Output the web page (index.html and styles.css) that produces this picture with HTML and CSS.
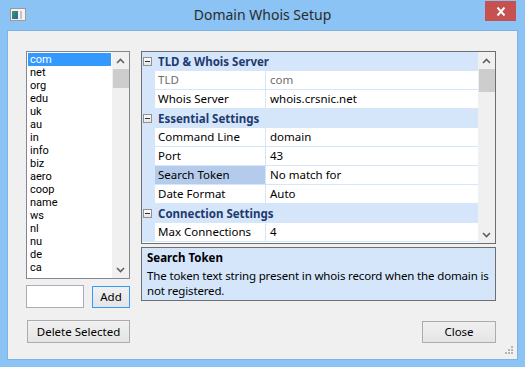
FILE: index.html
```html
<!DOCTYPE html>
<html lang="en">
<head>
    <meta charset="UTF-8">
    <title>Domain Whois Setup</title>
    <link rel="stylesheet" href="styles.css">
</head>
<body>
    <div class="window">
        <div class="titlebar">
            <div class="app-icon">
                <svg width="16" height="13" viewBox="0 0 16 13">
                    <defs>
                        <linearGradient id="ig" x1="0" y1="0" x2="1" y2="1">
                            <stop offset="0" stop-color="#3a9a6e"/>
                            <stop offset="1" stop-color="#2f5f9a"/>
                        </linearGradient>
                    </defs>
                    <rect x="0.5" y="0.5" width="15" height="12" fill="#f2f2f2" stroke="#9a9a9a"/>
                    <rect x="2" y="3" width="6" height="8" fill="url(#ig)"/>
                    <rect x="10" y="3" width="2" height="8" fill="#c4c4c4"/>
                </svg>
            </div>
            <div class="title">Domain Whois Setup</div>
            <div class="close-btn">
                <svg width="10" height="9" viewBox="0 0 10 9"><path d="M1.5 0.5L8.5 8.5M8.5 0.5L1.5 8.5" stroke="#fff" stroke-width="2"/></svg>
            </div>
        </div>

        <div class="client">
            <div class="left">
                <div class="listbox">
                    <ul class="items">
                        <li class="selected">com</li>
                        <li>net</li>
                        <li>org</li>
                        <li>edu</li>
                        <li>uk</li>
                        <li>au</li>
                        <li>in</li>
                        <li>info</li>
                        <li>biz</li>
                        <li>aero</li>
                        <li>coop</li>
                        <li>name</li>
                        <li>ws</li>
                        <li>nl</li>
                        <li>nu</li>
                        <li>de</li>
                        <li>ca</li>
                    </ul>
                    <div class="vscroll">
                        <div class="sb-btn"><svg width="9" height="6" viewBox="0 0 9 6"><path d="M1 5L4.5 1.5L8 5" fill="none" stroke="#606060" stroke-width="1.6"/></svg></div>
                        <div class="sb-thumb list-thumb"></div>
                        <div class="sb-track"></div>
                        <div class="sb-btn"><svg width="9" height="6" viewBox="0 0 9 6"><path d="M1 1L4.5 4.5L8 1" fill="none" stroke="#606060" stroke-width="1.6"/></svg></div>
                    </div>
                </div>
                <div class="add-row">
                    <div class="tld-input"></div>
                    <div class="btn btn-default btn-add">Add</div>
                </div>
                <div class="btn btn-delete">Delete Selected</div>
            </div>

            <div class="right">
                <div class="propgrid">
                    <div class="rows">
                        <div class="row category">
                            <div class="gutter"><span class="minus"></span></div>
                            <div class="cat-label">TLD &amp; Whois Server</div>
                        </div>
                        <div class="row">
                            <div class="gutter"></div>
                            <div class="name readonly">TLD</div>
                            <div class="value readonly">com</div>
                        </div>
                        <div class="row">
                            <div class="gutter"></div>
                            <div class="name">Whois Server</div>
                            <div class="value">whois.crsnic.net</div>
                        </div>
                        <div class="row category">
                            <div class="gutter"><span class="minus"></span></div>
                            <div class="cat-label">Essential Settings</div>
                        </div>
                        <div class="row">
                            <div class="gutter"></div>
                            <div class="name">Command Line</div>
                            <div class="value">domain</div>
                        </div>
                        <div class="row">
                            <div class="gutter"></div>
                            <div class="name">Port</div>
                            <div class="value">43</div>
                        </div>
                        <div class="row">
                            <div class="gutter"></div>
                            <div class="name selected">Search Token</div>
                            <div class="value">No match for</div>
                        </div>
                        <div class="row">
                            <div class="gutter"></div>
                            <div class="name">Date Format</div>
                            <div class="value">Auto</div>
                        </div>
                        <div class="row category">
                            <div class="gutter"><span class="minus"></span></div>
                            <div class="cat-label">Connection Settings</div>
                        </div>
                        <div class="row">
                            <div class="gutter"></div>
                            <div class="name">Max Connections</div>
                            <div class="value">4</div>
                        </div>
                    </div>
                    <div class="vscroll">
                        <div class="sb-btn"><svg width="9" height="6" viewBox="0 0 9 6"><path d="M1 5L4.5 1.5L8 5" fill="none" stroke="#606060" stroke-width="1.6"/></svg></div>
                        <div class="sb-thumb grid-thumb"></div>
                        <div class="sb-track"></div>
                        <div class="sb-btn"><svg width="9" height="6" viewBox="0 0 9 6"><path d="M1 1L4.5 4.5L8 1" fill="none" stroke="#606060" stroke-width="1.6"/></svg></div>
                    </div>
                </div>

                <div class="help">
                    <div class="help-title">Search Token</div>
                    <div class="help-text">The token text string present in whois record when the domain is<br>not registered.</div>
                </div>

                <div class="footer">
                    <div class="btn btn-close">Close</div>
                </div>
            </div>

            <svg class="grip" width="8" height="8" viewBox="0 0 8 8">
                <rect x="6" y="0" width="2" height="2" fill="#b5b5b5"/>
                <rect x="3" y="3" width="2" height="2" fill="#b5b5b5"/>
                <rect x="6" y="3" width="2" height="2" fill="#b5b5b5"/>
                <rect x="0" y="6" width="2" height="2" fill="#b5b5b5"/>
                <rect x="3" y="6" width="2" height="2" fill="#b5b5b5"/>
                <rect x="6" y="6" width="2" height="2" fill="#b5b5b5"/>
            </svg>
        </div>
    </div>
</body>
</html>
```

FILE: styles.css
```css
body {
    margin: 0;
    width: 525px;
    height: 367px;
    overflow: hidden;
    background: #8ac3f4;
    font-family: "Noto Sans", "Open Sans", sans-serif;
    font-size: 11.5px;
    color: #000;
}
.window {
    height: 367px;
    display: flex;
    flex-direction: column;
    padding: 0 7px 7px;
    box-sizing: border-box;
}
.titlebar {
    height: 30px;
    flex: none;
    display: grid;
    grid-template-columns: 1fr auto 1fr;
    align-items: start;
}
.app-icon {
    margin: 8px 0 0 3px;
    height: 13px;
}
.title {
    font-size: 14px;
    line-height: 18px;
    padding-top: 6px;
    color: #2b2b2b;
}
.close-btn {
    justify-self: end;
    width: 31px;
    height: 20px;
    margin: 1px 2px 0 0;
    background: #c75050;
    display: flex;
    align-items: center;
    justify-content: center;
}
.client {
    flex: 1;
    position: relative;
    display: flex;
    gap: 11px;
    padding: 20px 0 0 18px;
    background: #f0f0f0;
    border: 1px solid #7db3e4;
}
.left {
    width: 104px;
    display: flex;
    flex-direction: column;
}
.listbox {
    height: 228px;
    display: flex;
    border: 1px solid #828790;
    background: #fff;
    box-sizing: border-box;
}
.items {
    flex: 1;
    list-style: none;
    margin: 0;
    padding: 1px 1px 0;
    font-family: Roboto, "Noto Sans", sans-serif;
    font-size: 11px;
}
.items li {
    height: 13px;
    line-height: 13px;
    padding-left: 2px;
}
.items li.selected {
    background: #3399ff;
    color: #fff;
}
.vscroll {
    width: 17px;
    flex: none;
    display: flex;
    flex-direction: column;
    background: #f0f0f0;
}
.sb-btn {
    height: 17px;
    display: flex;
    align-items: center;
    justify-content: center;
}
.sb-track {
    flex: 1;
}
.sb-thumb {
    background: #cdcdcd;
    margin-left: 1px;
}
.list-thumb {
    height: 19px;
}
.grid-thumb {
    height: 23px;
}
.add-row {
    margin-top: 6px;
    display: flex;
    justify-content: space-between;
    align-items: flex-start;
}
.tld-input {
    width: 58px;
    height: 23px;
    border: 1px solid #abadb3;
    background: #fff;
    box-sizing: border-box;
}
.btn {
    height: 22px;
    line-height: 20px;
    text-align: center;
    border: 1px solid #acacac;
    background: linear-gradient(#f0f0f0, #e5e5e5);
    box-sizing: border-box;
}
.btn-default {
    border-color: #3399ff;
}
.btn-add {
    width: 38px;
    margin-top: 1px;
}
.btn-delete {
    width: 103px;
    height: 23px;
    line-height: 21px;
    margin-top: 12px;
    align-self: flex-end;
}
.right {
    width: 355px;
    display: flex;
    flex-direction: column;
}
.propgrid {
    height: 193px;
    display: flex;
    border: 1px solid #6e6e6e;
    background: #fff;
    box-sizing: border-box;
}
.rows {
    flex: 1;
}
.row {
    height: 19px;
    display: flex;
    background: #d5e6fb;
}
.gutter {
    width: 13px;
    flex: none;
    position: relative;
}
.minus {
    position: absolute;
    left: 1px;
    top: 5px;
    width: 9px;
    height: 9px;
    border: 1px solid #919191;
    background: linear-gradient(#fcfcfc, #e6e6e6);
    box-sizing: border-box;
}
.minus::after {
    content: "";
    position: absolute;
    left: 1px;
    top: 3px;
    width: 5px;
    height: 1px;
    background: #333;
}
.cat-label {
    padding-left: 3px;
    line-height: 19px;
    font-weight: bold;
    color: #1e3a6e;
}
.name {
    width: 110px;
    height: 18px;
    margin-right: 1px;
    padding-left: 3px;
    line-height: 18px;
    background: #fff;
    box-sizing: border-box;
    white-space: nowrap;
}
.name.selected {
    background: #b5cbeb;
}
.value {
    flex: 1;
    height: 18px;
    padding-left: 4px;
    line-height: 18px;
    background: #fff;
    white-space: nowrap;
}
.readonly {
    color: #6d6d6d;
}
.help {
    height: 54px;
    margin-top: 3px;
    padding: 2px 5px;
    border: 1px solid #6e6e6e;
    background: #d5e6fb;
    box-sizing: border-box;
    white-space: nowrap;
}
.help-title {
    font-weight: bold;
    line-height: 15px;
}
.help-text {
    margin-top: 3px;
    line-height: 15px;
    letter-spacing: -0.15px;
}
.footer {
    margin-top: 20px;
    display: flex;
    justify-content: flex-end;
}
.btn-close {
    width: 74px;
}
.grip {
    position: absolute;
    right: 4px;
    bottom: 5px;
}
```
